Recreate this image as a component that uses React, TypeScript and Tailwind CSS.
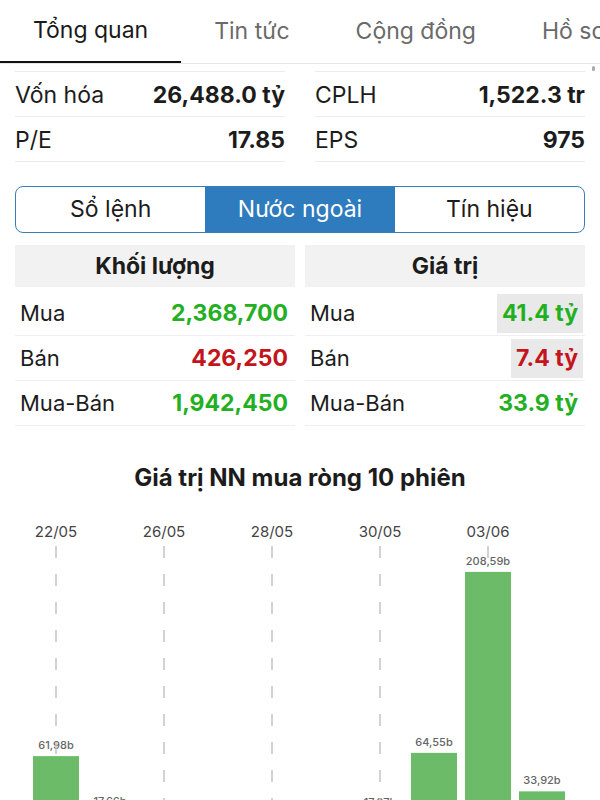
import React from 'react';

interface StatRow {
  label: string;
  value: string;
}

interface FlowRow {
  label: string;
  value: string;
  tone: 'up' | 'down';
  marked?: boolean;
}

const tabs = ['Tổng quan', 'Tin tức', 'Cộng đồng', 'Hồ sơ'];

const leftStats: StatRow[] = [
  { label: 'Vốn hóa', value: '26,488.0 tỷ' },
  { label: 'P/E', value: '17.85' },
];

const rightStats: StatRow[] = [
  { label: 'CPLH', value: '1,522.3 tr' },
  { label: 'EPS', value: '975' },
];

const volumeRows: FlowRow[] = [
  { label: 'Mua', value: '2,368,700', tone: 'up' },
  { label: 'Bán', value: '426,250', tone: 'down' },
  { label: 'Mua-Bán', value: '1,942,450', tone: 'up' },
];

const valueRows: FlowRow[] = [
  { label: 'Mua', value: '41.4 tỷ', tone: 'up', marked: true },
  { label: 'Bán', value: '7.4 tỷ', tone: 'down', marked: true },
  { label: 'Mua-Bán', value: '33.9 tỷ', tone: 'up' },
];

// 10 phiên, nhãn ngày cách 2 phiên
const sessions = [
  { date: '22/05', value: 61.98 },
  { date: '', value: 17.66 },
  { date: '26/05', value: 8.41 },
  { date: '', value: 3.25 },
  { date: '28/05', value: 11.6 },
  { date: '', value: 5.02 },
  { date: '30/05', value: 17.07 },
  { date: '', value: 64.55 },
  { date: '03/06', value: 208.59 },
  { date: '', value: 33.92 },
];

const StatColumn = ({ rows }: { rows: StatRow[] }) => (
  <div className="border-t border-[#ececec]">
    {rows.map((r) => (
      <div key={r.label} className="h-[45px] pt-[3px] flex items-center justify-between border-b border-[#ececec] text-[23px] text-[#1c1c1c]">
        <span>{r.label}</span>
        <span className="font-bold">{r.value}</span>
      </div>
    ))}
  </div>
);

const FlowColumn = ({ title, rows }: { title: string; rows: FlowRow[] }) => (
  <div>
    <div className="h-[42px] bg-[#f2f2f2] flex items-center justify-center text-[23px] font-bold text-[#1c1c1c]">
      {title}
    </div>
    <div className="mt-1">
      {rows.map((r) => (
        <div key={r.label} className="h-[45px] flex items-center justify-between border-b border-[#efefef] pl-[5px] pr-[2px] text-[22px]">
          <span className="text-[#1c1c1c]">{r.label}</span>
          <span
            className={
              'h-[39px] flex items-center px-[5px] text-[23px] font-bold ' +
              (r.tone === 'up' ? 'text-[#22b022] ' : 'text-[#c4151c] ') +
              (r.marked ? 'bg-[#e9e9e9]' : '')
            }
          >
            {r.value}
          </span>
        </div>
      ))}
    </div>
  </div>
);

const NetBuyChart = () => {
  const zero = 330;
  const scale = 1.2566;
  return (
    <svg width="600" height="340" className="block mt-[11px]">
      {sessions.map((s, i) => {
        const cx = 56 + 54 * i;
        const top = zero - s.value * scale;
        return (
          <text key={'l' + i} x={cx} y={top - 7} textAnchor="middle" fontSize="11" fontWeight="500" fill="#666">
            {s.value.toFixed(2).replace('.', ',')}b
          </text>
        );
      })}
      {sessions.map((s, i) =>
        s.date ? (
          <g key={'d' + i}>
            <text x={56 + 54 * i} y={33} textAnchor="middle" fontSize="15" fill="#444">
              {s.date}
            </text>
            <line x1={56 + 54 * i} x2={56 + 54 * i} y1={42} y2={zero} stroke="#c4c4c4" strokeWidth="1.5" strokeDasharray="12 16" />
          </g>
        ) : null
      )}
      {sessions.map((s, i) => {
        const h = s.value * scale;
        return <rect key={'b' + i} x={33 + 54 * i} y={zero - h} width={46} height={h} fill="#6cbb68" />;
      })}
    </svg>
  );
};

export default function App() {
  return (
    <div className="relative w-[600px] h-[800px] overflow-hidden bg-white font-['Inter','Noto_Sans',sans-serif]">
      <div className="flex h-16 border-b border-[#e6e6e6] overflow-hidden whitespace-nowrap">
        {tabs.map((t, i) => (
          <div
            key={t}
            className={
              'shrink-0 px-[33px] flex items-center text-[23px] ' +
              (i === 0 ? 'text-[#1a1a1a] border-b-[3px] border-[#111] -mb-px' : 'text-[#6a6a6a]')
            }
          >
            {t}
          </div>
        ))}
      </div>
      <div className="absolute right-[5px] top-[66px] w-[3px] h-[5px] rounded-full bg-[#aaa]" />

      <div className="mt-[7px] grid grid-cols-2 gap-[30px] px-[15px]">
        <StatColumn rows={leftStats} />
        <StatColumn rows={rightStats} />
      </div>

      <div className="mt-6 mx-[15px] h-[47px] grid grid-cols-3 border-[1.5px] border-[#3a7eb8] rounded-[8px] overflow-hidden text-[23px]">
        <div className="flex items-center justify-center text-[#1c1c1c]">Sổ lệnh</div>
        <div className="flex items-center justify-center bg-[#2e7bbd] text-white">Nước ngoài</div>
        <div className="flex items-center justify-center text-[#1c1c1c]">Tín hiệu</div>
      </div>

      <div className="mt-3 grid grid-cols-2 gap-[10px] px-[15px]">
        <FlowColumn title="Khối lượng" rows={volumeRows} />
        <FlowColumn title="Giá trị" rows={valueRows} />
      </div>

      <div className="mt-[37px] h-[30px] flex items-center justify-center text-[24px] font-bold text-[#1c1c1c]">
        Giá trị NN mua ròng 10 phiên
      </div>

      <NetBuyChart />
    </div>
  );
}
